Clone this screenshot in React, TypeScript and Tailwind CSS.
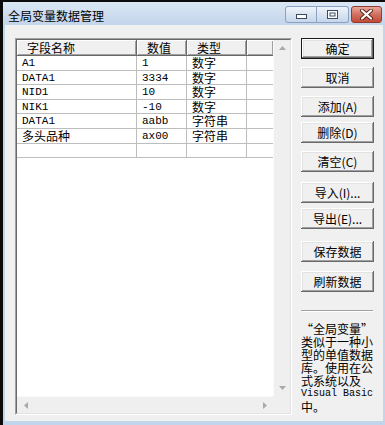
import React from "react";

const ROWS = [
  ["A1", "1", "数字"],
  ["DATA1", "3334", "数字"],
  ["NID1", "10", "数字"],
  ["NIK1", "-10", "数字"],
  ["DATA1", "aabb", "字符串"],
  ["多头品种", "ax00", "字符串"],
  ["", "", ""],
];

const HEADERS = [
  { label: "字段名称", w: "w-[120px]" },
  { label: "数值", w: "w-[50px]" },
  { label: "类型", w: "w-[60px]" },
  { label: "", w: "w-[27px]" },
];

const BUTTONS = [
  { label: "确定", mt: "mt-0", main: true },
  { label: "取消", mt: "mt-[8px]" },
  { label: "添加(A)", mt: "mt-[8px]" },
  { label: "删除(D)", mt: "mt-[5px]" },
  { label: "清空(C)", mt: "mt-[8px]" },
  { label: "导入(I)...", mt: "mt-[10px]" },
  { label: "导出(E)...", mt: "mt-[5px]" },
  { label: "保存数据", mt: "mt-[12px]" },
  { label: "刷新数据", mt: "mt-[9px]" },
];

const NOTE = ["类似于一种小", "型的单值数据", "库。使用在公", "式系统以及"];

const cjk = "font-['Noto_Sans_CJK_SC',sans-serif]";
const mono = "font-['Liberation_Mono','Noto_Sans_CJK_SC',monospace] text-[11px]";
const isAscii = (s: string) => /^[\x00-\x7f]*$/.test(s);

function Arrow({ dir }: { dir: "up" | "down" | "left" | "right" }) {
  const pts = {
    up: "0,4 3.5,0 7,4",
    down: "0,0 7,0 3.5,4",
    left: "4,0 4,7 0,3.5",
    right: "0,0 0,7 4,3.5",
  }[dir];
  const vert = dir === "up" || dir === "down";
  return (
    <svg width={vert ? 7 : 4} height={vert ? 4 : 7} viewBox={vert ? "0 0 7 4" : "0 0 4 7"}>
      <polygon points={pts} fill="#a9a9a9" />
    </svg>
  );
}

function TitleButtons() {
  return (
    <div className="ml-auto mt-[4px] mr-[3px] flex gap-[2px]">
      <div className="flex">
        <div className="w-[32px] h-[17px] rounded-l-[3px] border border-[#8aa1bf] bg-gradient-to-b from-[#eef3f9] to-[#c5d6ea] flex items-end justify-center pb-[3px]">
          <svg width="11" height="5" viewBox="0 0 11 5">
            <rect x="0.5" y="0.5" width="10" height="4" fill="#fff" stroke="#3b4a60" />
          </svg>
        </div>
        <div className="w-[32px] h-[17px] rounded-r-[3px] border border-l-0 border-[#8aa1bf] bg-gradient-to-b from-[#eef3f9] to-[#c5d6ea] flex items-center justify-center">
          <svg width="11" height="9" viewBox="0 0 11 9">
            <rect x="0.5" y="0.5" width="10" height="8" fill="#fff" stroke="#3b4a60" />
            <rect x="3" y="3" width="5" height="3" fill="#fff" stroke="#3b4a60" />
          </svg>
        </div>
      </div>
      <div className="w-[31px] h-[17px] rounded-[3px] border border-[#8e3b30] bg-gradient-to-b from-[#e9a79a] via-[#d0705f] to-[#c24a36] flex items-center justify-center">
        <svg width="13" height="11" viewBox="0 0 13 11">
          <path d="M2 1.5 L11 9.5 M11 1.5 L2 9.5" stroke="#5a1f17" strokeWidth="4" strokeLinecap="round" />
          <path d="M2 1.5 L11 9.5 M11 1.5 L2 9.5" stroke="#fff" strokeWidth="2.2" strokeLinecap="round" />
        </svg>
      </div>
    </div>
  );
}

function ListView() {
  return (
    <div className="w-[277px] h-[377px] border border-t-[#a0a0a0] border-l-[#a0a0a0] border-r-white border-b-white">
      <div className="w-full h-full border border-t-[#696969] border-l-[#696969] border-r-[#e3e3e3] border-b-[#e3e3e3] bg-white grid grid-cols-[1fr_17px] grid-rows-[1fr_17px]">
        <div className="overflow-hidden">
          <div className="flex h-[16px] w-[300px]">
            {HEADERS.map((h, i) => (
              <div
                key={i}
                className={`${h.w} h-full shrink-0 bg-[#f0f0f0] pl-[10px] text-[12px] leading-[16px] ${cjk} shadow-[inset_-1px_-1px_#696969,inset_1px_1px_#fff,inset_-2px_-2px_#a0a0a0]`}
              >
                {h.label}
              </div>
            ))}
          </div>
          {ROWS.map((r, i) => (
            <div key={i} className="flex h-[14.6px] w-[300px] border-b border-[#bdbdbd]">
              {r.map((c, j) => (
                <div
                  key={j}
                  className={`${HEADERS[j].w} shrink-0 border-r border-[#bdbdbd] pl-[5px] leading-[14px] whitespace-nowrap ${isAscii(c) ? mono : `${cjk} text-[12px]`}`}
                >
                  {c}
                </div>
              ))}
              <div className="w-[27px] shrink-0 border-r border-[#bdbdbd]" />
            </div>
          ))}
        </div>
        <div className="bg-[#efefef] border-l border-[#fafafa] flex flex-col items-center justify-between pt-[6px] pb-[6px]">
          <Arrow dir="up" />
          <Arrow dir="down" />
        </div>
        <div className="bg-[#efefef] border-t border-[#fafafa] flex items-center justify-between pl-[7px] pr-[6px]">
          <Arrow dir="left" />
          <Arrow dir="right" />
        </div>
        <div className="bg-[#efefef]" />
      </div>
    </div>
  );
}

function Btn({ label, mt, main }: { label: string; mt: string; main?: boolean }) {
  return (
    <div className={`${mt} w-[73px] h-[21px] ${main ? "border border-[#1a1a1a]" : ""}`}>
      <div className="w-full h-full bg-[#f0f0f0] flex items-center justify-center text-[12px] leading-none text-black shadow-[inset_-1px_-1px_#696969,inset_1px_1px_#fff,inset_-2px_-2px_#a0a0a0,inset_2px_2px_#e3e3e3]">
        <span className={cjk}>{label}</span>
      </div>
    </div>
  );
}

export default function App() {
  return (
    <div className="w-[385px] h-[425px] bg-[#0b0b0b] pl-[3px] pt-[2px] overflow-hidden" lang="zh-CN">
      <div className="w-[382px] h-[423px] bg-[#c3d5ea] flex flex-col">
        <div className="h-[23px] flex bg-gradient-to-b from-[#dbe7f4] to-[#c3d5eb]">
          <div className={`pl-[5px] pt-[6px] text-[12px] leading-[16px] text-black ${cjk}`}>全局变量数据管理</div>
          <TitleButtons />
        </div>
        <div className="mx-[2px] h-[396px] bg-[#f0f0f0] flex pl-[10px] pt-[13px]">
          <ListView />
          <div className="ml-[9px] w-[73px] flex flex-col">
            {BUTTONS.map((b) => (
              <Btn key={b.label} {...b} />
            ))}
            <div className="mt-[18px] w-[72px] h-[2px] border-t border-[#a0a0a0] border-b border-b-white" />
            <div className={`mt-[10px] w-[76px] flex flex-col text-[12px] text-black ${cjk}`}>
              <div className="h-[13px] leading-[13px] [font-feature-settings:'fwid']">“全局变量”</div>
              {NOTE.map((t) => (
                <div key={t} className="h-[13px] leading-[13px]">{t}</div>
              ))}
              <div className="h-[13px] leading-[13px] font-['Liberation_Mono',monospace] text-[10px]">Visual Basic</div>
              <div className="h-[13px] leading-[13px]">中。</div>
            </div>
          </div>
        </div>
      </div>
    </div>
  );
}
